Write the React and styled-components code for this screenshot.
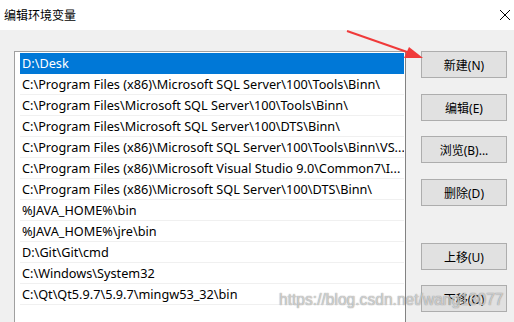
import React from "react";
import styled, { createGlobalStyle } from "styled-components";

const GlobalStyle = createGlobalStyle`
  html, body {
    margin: 0;
    padding: 0;
    background: #f0f0f0;
  }
  body {
    font-family: "Noto Sans", "Noto Sans CJK SC", sans-serif;
    font-size: 12px;
    color: #000;
  }
`;

const StyledWindow = styled.div`
  position: relative;
  width: 514px;
  height: 322px;
  overflow: hidden;
  background: #f0f0f0;
`;

const StyledTitleBar = styled.div`
  height: 30px;
  background: #fff;
  display: flex;
  align-items: center;
  justify-content: space-between;
  padding: 0 3px 1px 4px;
  box-sizing: border-box;
  font-family: "Noto Sans CJK SC", sans-serif;
  font-size: 12px;
`;

const StyledBody = styled.div`
  display: flex;
  align-items: flex-start;
  padding: 21px 0 0 14px;
`;

const StyledList = styled.ul`
  list-style: none;
  margin: 0;
  width: 392px;
  height: 290px;
  box-sizing: border-box;
  padding: 1px 1px 0 5px;
  background: #fff;
  border: 1px solid #a0a0a0;
  border-right-color: #828282;
  font-size: 12.7px;
`;

const StyledRow = styled.li`
  height: 21px;
  box-sizing: border-box;
  display: flex;
  align-items: center;
  padding-left: 2px;
  white-space: nowrap;
  overflow: hidden;
  border-bottom: 1px solid ${({ selected }) => (selected ? "#0078d7" : "#f0f0f0")};
  background: ${({ selected }) => (selected ? "#0078d7" : "#fff")};
  color: ${({ selected }) => (selected ? "#fff" : "#000")};
`;

const StyledButtons = styled.div`
  display: flex;
  flex-direction: column;
  margin-left: 15px;
`;

const StyledButton = styled.button`
  width: 86px;
  height: 27px;
  margin-top: ${({ space }) => space}px;
  box-sizing: border-box;
  background: #e1e1e1;
  border: 1px solid #adadad;
  border-radius: 0;
  font-family: "Noto Sans", "Noto Sans CJK SC", sans-serif;
  font-size: 12px;
  color: #000;
  padding: 0;
`;

const StyledArrow = styled.svg`
  position: absolute;
  left: 0;
  top: 0;
  pointer-events: none;
`;

const StyledWatermark = styled.div`
  position: absolute;
  left: 279px;
  top: 291px;
  font-family: "Liberation Sans", Arial, sans-serif;
  font-size: 15.6px;
  white-space: nowrap;
  color: rgba(255, 255, 255, 0.55);
  text-shadow: 0 0 1px rgba(120, 120, 120, 0.7), 0 0 1px rgba(120, 120, 120, 0.6);
  pointer-events: none;
`;

const paths = [
  "D:\\Desk",
  "C:\\Program Files (x86)\\Microsoft SQL Server\\100\\Tools\\Binn\\",
  "C:\\Program Files\\Microsoft SQL Server\\100\\Tools\\Binn\\",
  "C:\\Program Files\\Microsoft SQL Server\\100\\DTS\\Binn\\",
  "C:\\Program Files (x86)\\Microsoft SQL Server\\100\\Tools\\Binn\\VS...",
  "C:\\Program Files (x86)\\Microsoft Visual Studio 9.0\\Common7\\I...",
  "C:\\Program Files (x86)\\Microsoft SQL Server\\100\\DTS\\Binn\\",
  "%JAVA_HOME%\\bin",
  "%JAVA_HOME%\\jre\\bin",
  "D:\\Git\\Git\\cmd",
  "C:\\Windows\\System32",
  "C:\\Qt\\Qt5.9.7\\5.9.7\\mingw53_32\\bin",
];

const buttons = [
  { label: "新建(N)", space: 0 },
  { label: "编辑(E)", space: 16 },
  { label: "浏览(B)...", space: 15 },
  { label: "删除(D)", space: 16 },
  { label: "上移(U)", space: 37 },
  { label: "下移(O)", space: 15 },
];

export default function App() {
  return (
    <StyledWindow>
      <GlobalStyle />
      <StyledTitleBar>
        <span>编辑环境变量</span>
        <svg width="12" height="12" viewBox="0 0 12 12">
          <path d="M1 1 L11 11 M11 1 L1 11" stroke="#000" strokeWidth="1" fill="none" />
        </svg>
      </StyledTitleBar>
      <StyledBody>
        <StyledList>
          {paths.map((p, i) => (
            <StyledRow key={i} selected={i === 0}>
              {p}
            </StyledRow>
          ))}
        </StyledList>
        <StyledButtons>
          {buttons.map((b) => (
            <StyledButton key={b.label} space={b.space}>
              {b.label}
            </StyledButton>
          ))}
        </StyledButtons>
      </StyledBody>
      <StyledArrow width="514" height="322">
        <line x1="347" y1="31" x2="410" y2="53" stroke="#f03a3a" strokeWidth="2" />
        <polygon points="423,58 404,58 409,47" fill="#f03a3a" />
      </StyledArrow>
      <StyledWatermark>https://blog.csdn.net/wang13077</StyledWatermark>
    </StyledWindow>
  );
}
